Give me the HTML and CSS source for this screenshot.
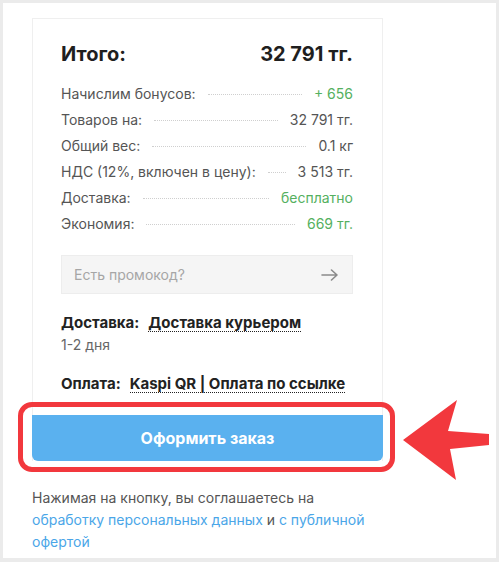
FILE: index.html
```html
<!DOCTYPE html>
<html lang="ru">
<head>
<meta charset="utf-8">
<title>Итого</title>
<link rel="stylesheet" href="styles.css">
</head>
<body>
<div class="frame">
  <div class="card">
    <div class="card-body">
      <div class="total">
        <span>Итого:</span>
        <span>32 791 тг.</span>
      </div>
      <ul class="rows">
        <li class="row"><span class="label">Начислим бонусов:</span><span class="dots"></span><span class="value green">+ 656</span></li>
        <li class="row"><span class="label">Товаров на:</span><span class="dots"></span><span class="value">32 791 тг.</span></li>
        <li class="row"><span class="label">Общий вес:</span><span class="dots"></span><span class="value">0.1 кг</span></li>
        <li class="row"><span class="label">НДС (12%, включен в цену):</span><span class="dots"></span><span class="value">3 513 тг.</span></li>
        <li class="row"><span class="label">Доставка:</span><span class="dots"></span><span class="value green">бесплатно</span></li>
        <li class="row"><span class="label">Экономия:</span><span class="dots"></span><span class="value green">669 тг.</span></li>
      </ul>
      <div class="promo">
        <span class="promo-text">Есть промокод?</span>
        <svg class="promo-arrow" width="17" height="12" viewBox="0 0 17 12" fill="none" stroke="#8a8a8a" stroke-width="1.6" stroke-linecap="round" stroke-linejoin="round"><path d="M1 6h15M10.5 1l5.5 5-5.5 5"/></svg>
      </div>
      <div class="option">
        <span class="opt-label">Доставка:</span>
        <span class="opt-link">Доставка курьером</span>
      </div>
      <div class="opt-note">1-2 дня</div>
      <div class="option pay">
        <span class="opt-label">Оплата:</span>
        <span class="opt-link">Kaspi QR | Оплата по ссылке</span>
      </div>
    </div>
    <button class="submit">Оформить заказ</button>
  </div>
  <p class="agree">Нажимая на кнопку, вы соглашаетесь на <a class="link">обработку персональных данных</a> и <a class="link">с публичной</a> <a class="link">офертой</a></p>

  <div class="highlight"></div>
  <svg class="pointer" width="90" height="84" viewBox="0 0 90 84" fill="#f2383d"><path d="M0 41 L54 1 L45 32 L86 35 L86 46 L47 50 L53 81 Z"/></svg>
</div>
</body>
</html>
```
FILE: styles.css
```css
* { box-sizing: border-box; }
html, body { margin: 0; padding: 0; background: #fff; }
body { font-family: Inter, "Noto Sans", sans-serif; color: #222; }

.frame {
  position: relative;
  width: 499px;
  height: 562px;
  border: 3px solid #ebebeb;
  border-bottom-width: 4px;
  background: #fff;
  padding: 15px 0 0 29px;
  overflow: hidden;
}

.card {
  width: 351px;
  border: 1px solid #efefef;
  border-bottom: none;
}

.card-body {
  padding: 23px 29px 21px 28px;
}

.total {
  display: flex;
  justify-content: space-between;
  font-size: 20px;
  line-height: 24px;
  font-weight: 700;
  color: #1f1f1f;
}

.rows {
  list-style: none;
  margin: 14px 0 0;
  padding: 0;
}

.row {
  display: flex;
  align-items: center;
  height: 26px;
  font-size: 14px;
  color: #555;
}

.dots {
  flex: 1;
  height: 0;
  border-bottom: 1px dotted #cfcfcf;
  margin: 0 12px;
  position: relative;
  top: 1px;
}

.value { color: #555; }
.green { color: #55b060; }

.promo {
  margin-top: 19px;
  height: 39px;
  background: #f5f5f5;
  border: 1px solid #ededed;
  display: flex;
  align-items: center;
  justify-content: space-between;
  padding: 0 14px 0 12px;
}

.promo-text {
  font-size: 14px;
  color: #a6a6a6;
}

.option {
  margin-top: 19px;
  display: flex;
  align-items: baseline;
  font-size: 15px;
  line-height: 20px;
  font-weight: 700;
  color: #222;
}

.opt-label { margin-right: 9px; }

.opt-link {
  border-bottom: 1px dotted #222;
  line-height: 17px;
}

.opt-note {
  margin-top: 2px;
  font-size: 14px;
  line-height: 20px;
  color: #666;
}

.option.pay { margin-top: 19px; }

.submit {
  display: block;
  width: calc(100% + 2px);
  margin: 0 -1px;
  height: 46px;
  border: none;
  border-radius: 0 0 6px 6px;
  background: #5ab1ef;
  color: #fff;
  font-family: inherit;
  font-size: 16px;
  font-weight: 700;
  cursor: pointer;
}

.agree {
  margin: 26px 0 0;
  width: 340px;
  font-size: 14px;
  line-height: 22px;
  color: #555;
}

.link { color: #4aa6e8; text-decoration: none; }

.highlight {
  position: absolute;
  left: 15px;
  top: 399px;
  width: 377px;
  height: 70px;
  border: 5px solid #f2383d;
  border-radius: 14px;
}

.pointer {
  position: absolute;
  left: 400px;
  top: 396px;
}
```
